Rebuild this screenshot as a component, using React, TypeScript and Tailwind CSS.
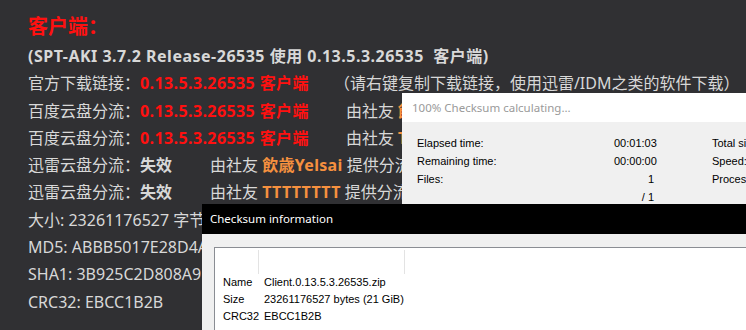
import React from "react"

const page = "font-['Noto_Sans','Noto_Sans_CJK_SC',sans-serif]"
const win = "font-['Liberation_Sans',Arial,sans-serif]"

function Red({ children }: { children: React.ReactNode }) {
  return <span className="font-bold tracking-[0.4px] text-[#ff1010]">{children}</span>
}

function Orange({ children }: { children: React.ReactNode }) {
  return <span className="font-bold tracking-[0.3px] text-[#f5903f]">{children}</span>
}

export default function App() {
  const stats = [
    ["Elapsed time:", "00:01:03", "Total size:"],
    ["Remaining time:", "00:00:00", "Speed:"],
    ["Files:", "1", "Processed:"],
    ["", "/ 1", ""],
  ]

  const info = [
    ["Name", "Client.0.13.5.3.26535.zip"],
    ["Size", "23261176527 bytes (21 GiB)"],
    ["CRC32", "EBCC1B2B"],
  ]

  return (
    <div className={`relative w-[746px] h-[330px] overflow-hidden bg-[#303033] text-[#d8d8d8] ${page}`}>
      <div className="pl-[28px] pt-[13px] text-[16px] leading-[27.3px] whitespace-nowrap">
        <div className="text-[20px] font-bold text-[#ff1010] leading-[28px] mb-[2px]">客户端：</div>
        <div className="font-bold tracking-[0.5px]">(SPT-AKI 3.7.2 Release-26535 使用 0.13.5.3.26535&nbsp;&nbsp;客户端)</div>
        <div>
          官方下载链接：<Red>0.13.5.3.26535 客户端</Red>
          <span className="ml-[25px]">（请右键复制下载链接，使用迅雷/IDM之类的软件下载）</span>
        </div>
        <div>
          百度云盘分流：<Red>0.13.5.3.26535 客户端</Red>
          <span className="ml-[37px]">由社友 <Orange>飲歳Yelsai</Orange> 提供分流</span>
        </div>
        <div>
          百度云盘分流：<Red>0.13.5.3.26535 客户端</Red>
          <span className="ml-[37px]">由社友 <Orange>TTTTTTTT</Orange> 提供分流</span>
        </div>
        <div>
          迅雷云盘分流：<span className="font-bold">失效</span>
          <span className="ml-[38px]">由社友 <Orange>飲歳Yelsai</Orange> 提供分流</span>
        </div>
        <div>
          迅雷云盘分流：<span className="font-bold">失效</span>
          <span className="ml-[38px]">由社友 <Orange>TTTTTTTT</Orange> 提供分流</span>
        </div>
        <div>大小: 23261176527 字节 (21.66 GB)</div>
        <div>MD5: ABBB5017E28D4A3C7F1E0B2D9C8A6F51</div>
        <div>SHA1: 3B925C2D808A9E4F61C0D7B2A85E3F19C4D6A702</div>
        <div>CRC32: EBCC1B2B</div>
      </div>

      {/* progress window */}
      <div className={`absolute left-[402px] top-[93px] w-[420px] h-[140px] ${win}`}>
        <div className="h-[29px] bg-white flex items-center pl-[10px] text-[11.5px] text-[#9a9a9a] font-['Noto_Sans',sans-serif]">
          100% Checksum calculating...
        </div>
        <div className="bg-[#f0f0f0] h-full pt-[12px] pl-[15px] text-[11px] text-black">
          {stats.map((r, i) => (
            <div key={i} className="flex h-[18px] items-center">
              <div className="w-[197px]">{r[0]}</div>
              <div className="w-[40px] text-right">{r[1]}</div>
              <div className="ml-[58px]">{r[2]}</div>
            </div>
          ))}
        </div>
      </div>

      {/* result window */}
      <div className={`absolute left-[202px] top-[204px] w-[560px] h-[140px] ${win}`}>
        <div className="h-[30px] bg-black flex items-center pl-[8px] text-[11.5px] text-white font-['Noto_Sans',sans-serif]">
          Checksum information
        </div>
        <div className="bg-[#f0f0f0] h-full pt-[13px] pl-[12px]">
          <div className="bg-white border-l border-t border-[#8a8d93] h-full text-[11px] text-black">
            <div className="flex h-[26px]">
              <div className="w-[44px] border-r border-[#e3e3e3] mt-[2px]" />
              <div className="w-[146px] border-r border-[#e3e3e3] mt-[2px]" />
            </div>
            {info.map((r) => (
              <div key={r[0]} className="flex h-[17px] items-center pl-[8px] first:mt-[2px]">
                <div className="w-[41px]">{r[0]}</div>
                <div>{r[1]}</div>
              </div>
            ))}
          </div>
        </div>
      </div>
    </div>
  )
}
